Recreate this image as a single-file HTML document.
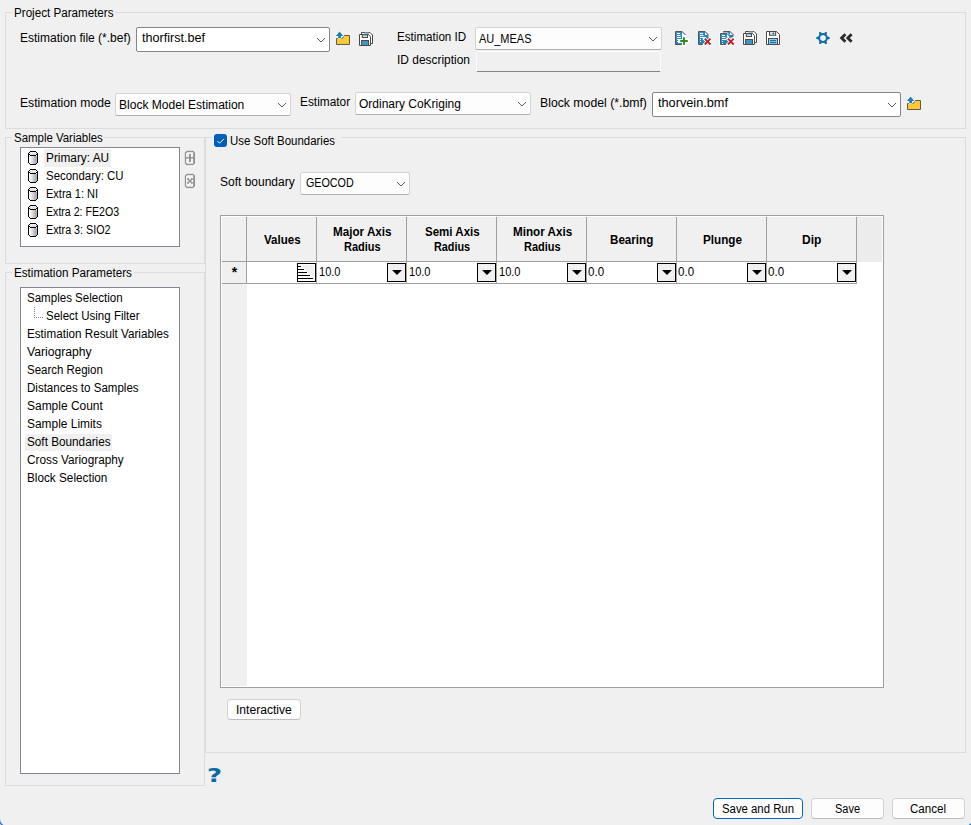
<!DOCTYPE html><html><head><meta charset="utf-8"><title>Estimation Editor</title><style>
*{box-sizing:border-box;margin:0;padding:0}
html,body{width:971px;height:825px;overflow:hidden;background:#f0f0f0}
body{position:relative;font:12px "Liberation Sans",sans-serif;color:#000}
.a{position:absolute}
.t{position:absolute;white-space:pre;line-height:14px;height:14px}
.grp{position:absolute;border:1px solid #dcdcdc}
.cb{position:absolute;background:#fff;border:1px solid #868686;border-radius:2px}
.cb2{position:absolute;background:#fdfdfd;border:1px solid #d4d4d4;border-bottom-color:#b0b0b0;border-radius:2.5px}
.lb{position:absolute;background:#fff;border:1px solid #828790}
.hl{position:absolute;background:#f0f0f0}
.btn{position:absolute;background:#fdfdfd;border:1px solid #d2d2d2;border-bottom-color:#bcbcbc;border-radius:4px}
.hd{position:absolute;background:#f0f0f0;border-right:1px solid #a0a0a0;border-bottom:1px solid #a0a0a0;font-weight:bold;text-align:center}
.dd{position:absolute;width:19px;height:19px;background:#f0f0f0;border:1px solid #000}
  .dd:after{content:"";position:absolute;left:3.6px;top:6px;border:5px solid transparent;border-top:5px solid #000;border-bottom:0}
svg{position:absolute;overflow:visible}
</style></head><body>
<div class="grp" style="left:5px;top:12px;width:961px;height:117px"></div>
<div class="grp" style="left:5px;top:137px;width:200px;height:127px"></div>
<div class="grp" style="left:5px;top:272px;width:200px;height:514px"></div>
<div class="grp" style="left:205px;top:137px;width:761px;height:616px"></div>
<div class="a" style="left:12px;top:8px;width:103px;height:10px;background:#f0f0f0"></div>
<div class="a" style="left:12px;top:133px;width:92px;height:10px;background:#f0f0f0"></div>
<div class="a" style="left:12px;top:268px;width:122px;height:10px;background:#f0f0f0"></div>
<div class="a" style="left:212px;top:133px;width:129px;height:10px;background:#f0f0f0"></div>
<div class="cb" style="left:136px;top:27px;width:194px;height:25px"></div><svg class="a" style="left:316px;top:36.5px" width="10" height="6" viewBox="0 0 10 6"><path d="M1 1 L5 5 L9 1" fill="none" stroke="#5a5a5a" stroke-width="1"/></svg>
<div class="cb2" style="left:475px;top:27px;width:187px;height:23px"></div><svg class="a" style="left:648px;top:36px" width="10" height="6" viewBox="0 0 10 6"><path d="M1 1 L5 5 L9 1" fill="none" stroke="#5a5a5a" stroke-width="1"/></svg>
<div class="a" style="left:476px;top:51px;width:185px;height:21px;background:#f0f0f0;border:1px solid #fbfbfb;border-bottom:1px solid #868686;border-radius:2.5px 2.5px 1.5px 1.5px"></div>
<div class="cb2" style="left:115px;top:93px;width:176px;height:23px"></div><svg class="a" style="left:277px;top:102px" width="10" height="6" viewBox="0 0 10 6"><path d="M1 1 L5 5 L9 1" fill="none" stroke="#5a5a5a" stroke-width="1"/></svg>
<div class="cb2" style="left:355px;top:92px;width:176px;height:23px"></div><svg class="a" style="left:517px;top:100.9px" width="10" height="6" viewBox="0 0 10 6"><path d="M1 1 L5 5 L9 1" fill="none" stroke="#5a5a5a" stroke-width="1"/></svg>
<div class="cb" style="left:652px;top:92px;width:249px;height:25px"></div><svg class="a" style="left:887px;top:101.5px" width="10" height="6" viewBox="0 0 10 6"><path d="M1 1 L5 5 L9 1" fill="none" stroke="#5a5a5a" stroke-width="1"/></svg>
<div class="lb" style="left:20px;top:147px;width:160px;height:100px"></div>
<div class="hl" style="left:44px;top:149px;width:67px;height:18px"></div>
<div class="lb" style="left:20px;top:287px;width:160px;height:487px"></div>
<div class="hl" style="left:25px;top:434px;width:87px;height:17px"></div>
<svg style="left:34px;top:307px" width="10" height="12" viewBox="0 0 10 12" shape-rendering="crispEdges"><path d="M0 0h1v1h-1zM0 2h1v1h-1zM0 4h1v1h-1zM0 6h1v1h-1zM0 8h1v1h-1zM0 10h1v1h-1zM2 10h1v1h-1zM4 10h1v1h-1zM6 10h1v1h-1zM8 10h1v1h-1z" fill="#808080"/></svg>
<div class="a" style="left:214px;top:134px;width:13px;height:13px;background:#005fb8;border-radius:3px"></div>
<svg style="left:214px;top:134px" width="13" height="13" viewBox="0 0 13 13"><path d="M3.5 7.1 L5.6 9.2 L9.9 4.9" fill="none" stroke="#fff" stroke-width="1"/></svg>
<div class="cb2" style="left:300px;top:172px;width:110px;height:23px"></div><svg class="a" style="left:396px;top:180.5px" width="10" height="6" viewBox="0 0 10 6"><path d="M1 1 L5 5 L9 1" fill="none" stroke="#5a5a5a" stroke-width="1"/></svg>
<div class="a" style="left:220px;top:215px;width:664px;height:473px;background:#fff;border:1px solid #a0a0a0"></div>
<div class="a" style="left:222px;top:217px;width:660px;height:45px;background:#ececec"></div>
<div class="a" style="left:222px;top:262px;width:25px;height:424px;background:#f0f0f0"></div>
<div class="hd" style="left:222px;top:217px;width:25px;height:45px"></div>
<div class="hd" style="left:247px;top:217px;width:70px;height:45px"></div>
<div class="hd" style="left:317px;top:217px;width:90px;height:45px"></div>
<div class="hd" style="left:407px;top:217px;width:90px;height:45px"></div>
<div class="hd" style="left:497px;top:217px;width:90px;height:45px"></div>
<div class="hd" style="left:587px;top:217px;width:90px;height:45px"></div>
<div class="hd" style="left:677px;top:217px;width:90px;height:45px"></div>
<div class="hd" style="left:767px;top:217px;width:90px;height:45px"></div>
<div class="a" style="left:222px;top:262px;width:25px;height:22px;border-right:1px solid #a0a0a0;border-bottom:1px solid #a0a0a0;background:#f0f0f0"></div>
<div class="t" style="left:231.7px;top:265.4px;font-weight:bold;font-size:14px">*</div>
<div class="a" style="left:247px;top:262px;width:610px;height:22px;border-bottom:1px solid #a0a0a0;border-right:1px solid #a0a0a0"></div>
<div class="a" style="left:316px;top:262px;width:1px;height:21px;background:#a0a0a0"></div>
<div class="a" style="left:406px;top:262px;width:1px;height:21px;background:#a0a0a0"></div>
<div class="a" style="left:496px;top:262px;width:1px;height:21px;background:#a0a0a0"></div>
<div class="a" style="left:586px;top:262px;width:1px;height:21px;background:#a0a0a0"></div>
<div class="a" style="left:676px;top:262px;width:1px;height:21px;background:#a0a0a0"></div>
<div class="a" style="left:766px;top:262px;width:1px;height:21px;background:#a0a0a0"></div>
<div class="a" style="left:297px;top:263px;width:19px;height:19px;background:#fff;border:1px solid #000"></div>
<svg style="left:297px;top:263px" width="19" height="19" viewBox="0 0 19 19"><path d="M5 2 H17 V16 L14 13 L11 10 L8 7 Z" fill="#f0f0f0"/><path d="M1 3.5H4 M1 6.5H7 M1 9.5H10 M1 12.5H13 M1 15.5H16" stroke="#000" stroke-width="1" fill="none"/></svg>
<div class="dd" style="left:387px;top:263px"></div>
<div class="dd" style="left:477px;top:263px"></div>
<div class="dd" style="left:567px;top:263px"></div>
<div class="dd" style="left:657px;top:263px"></div>
<div class="dd" style="left:747px;top:263px"></div>
<div class="dd" style="left:837px;top:263px"></div>
<div class="btn" style="left:227px;top:699px;width:74px;height:21px"></div>
<div class="btn" style="left:713px;top:798px;width:90px;height:21px;border-color:#0067c0"></div>
<div class="btn" style="left:811px;top:798px;width:73px;height:21px"></div>
<div class="btn" style="left:892px;top:798px;width:73px;height:21px"></div>
<div class="a" style="left:206.9px;top:762.6px;font:bold 20px 'DejaVu Sans','Liberation Sans',sans-serif;color:#0a6aa6;line-height:24px;transform-origin:0 0;transform:scaleX(1.3)">?</div>
<svg style="left:-1.5px;top:816.5px" width="10" height="10" viewBox="0 0 10 10"><path d="M0.4 2 A7.6 7.6 0 0 0 8 9.6 V10 H0 Z" fill="#cfcfcf"/><path d="M0.4 2 A7.6 7.6 0 0 0 8 9.6" fill="none" stroke="#1a70d0" stroke-width="1.2"/></svg>
<svg style="left:962.5px;top:816.5px" width="10" height="10" viewBox="0 0 10 10"><path d="M9.6 2 A7.6 7.6 0 0 1 2 9.6 V10 H10 Z" fill="#cfcfcf"/><path d="M9.6 2 A7.6 7.6 0 0 1 2 9.6" fill="none" stroke="#1a70d0" stroke-width="1.2"/></svg>
<svg style="left:332px;top:28px" width="24" height="20" viewBox="0 0 24 20" ><path d="M4.5 10.5 H10.2 L12.2 7.5 H17.5 V16.5 H4.5 Z" fill="#fcc934" stroke="#5f5a50" stroke-width="1" stroke-linejoin="round"/><path d="M7.6 3.6 L11.3 8 H9.1 V10.1 H6.2 V8 H3.9 Z" fill="#1b7fb6" stroke="#fff" stroke-width="1.2" paint-order="stroke" stroke-linejoin="round"/></svg>
<svg style="left:354px;top:28px" width="24" height="20" viewBox="0 0 24 20" ><path d="M7.5 6.5 V4.5 H16 L18.5 7 V15.5 H16.5" fill="#fff" stroke="#4a4a4a" stroke-width="1" stroke-linejoin="round"/><rect x="10.5" y="4.5" width="4.5" height="2" fill="#8cc3e0" stroke="none"/><path d="M5.5 6.5 H14.5 L16.5 8.8 V17.5 H5.5 Z" fill="#fff" stroke="#4a4a4a" stroke-width="1" stroke-linejoin="round"/><rect x="8.3" y="6.8" width="5.2" height="2.7" fill="#cfe3ee" stroke="#4a4a4a" stroke-width="1"/><rect x="7.6" y="12.5" width="6.9" height="5" fill="#3c96c8" stroke="#4a4a4a" stroke-width="1"/></svg>
<svg style="left:670px;top:26px" width="24" height="24" viewBox="0 0 24 24" ><defs><linearGradient id="dg" x1="0" y1="0" x2="1" y2="1"><stop offset="0" stop-color="#3a9bd0"/><stop offset="1" stop-color="#1673ac"/></linearGradient></defs><path d="M5.5 5.5 H12 L15.5 9 V18.5 H5.5 Z" fill="url(#dg)" stroke="none"/><path d="M12 5.8 L15.2 9 H12 Z" fill="#fff"/><path d="M15.5 9 L12 5.5 H5.5 V18.5 H11.5" fill="none" stroke="#555" stroke-width="1"/><path d="M7 7.5 h3 M7 9.5 h3.5 M7 11.5 h4 M7 13.5 h1 M7 15.5 h1" stroke="#fff" stroke-width="1"/><path d="M14 11 V19 M10 15 H18" stroke="#fff" stroke-width="4" stroke-linecap="square"/><path d="M14 11.2 V18.8 M10.2 15 H17.8" stroke="#2a8c1a" stroke-width="1.9"/></svg>
<svg style="left:692px;top:26px" width="24" height="24" viewBox="0 0 24 24" ><defs><linearGradient id="dg" x1="0" y1="0" x2="1" y2="1"><stop offset="0" stop-color="#3a9bd0"/><stop offset="1" stop-color="#1673ac"/></linearGradient></defs><path d="M6.5 5.5 H13 L16.5 9 V18.5 H6.5 Z" fill="url(#dg)" stroke="none"/><path d="M13 5.8 L16.2 9 H13 Z" fill="#fff"/><path d="M16.5 9 L13 5.5 H6.5 V18.5 H12.5" fill="none" stroke="#555" stroke-width="1"/><path d="M8 7.5 h3 M8 9.5 h3.5 M8 11.5 h4 M8 13.5 h1 M8 15.5 h1" stroke="#fff" stroke-width="1"/><path d="M13.0 13.0 L18.2 18.2 M18.2 13.0 L13.0 18.2" stroke="#fff" stroke-width="3.6" stroke-linecap="square"/><path d="M12.7 12.7 L18.5 18.5 M18.5 12.7 L12.7 18.5" stroke="#b8202a" stroke-width="1.9"/></svg>
<svg style="left:692px;top:26px" width="48" height="24" viewBox="0 0 48 24" ><defs><linearGradient id="dg" x1="0" y1="0" x2="1" y2="1"><stop offset="0" stop-color="#3a9bd0"/><stop offset="1" stop-color="#1673ac"/></linearGradient></defs><g><path d="M31.5 5.5 H38 L41.5 9 V11.5 H31.5 Z" fill="url(#dg)" stroke="none"/><path d="M38 5.8 L41.2 9 H38 Z" fill="#fff"/><path d="M41.5 9 L38 5.5 H31.5 V11.5 H37.5" fill="none" stroke="#555" stroke-width="1"/></g><path d="M27.5 6.5 H35.5 L37.5 9 V19.5 H27.5 Z" fill="#fff"/><path d="M28.5 7.5 H35 L38.5 11 V18.5 H28.5 Z" fill="url(#dg)" stroke="none"/><path d="M35 7.8 L38.2 11 H35 Z" fill="#fff"/><path d="M38.5 11 L35 7.5 H28.5 V18.5 H34.5" fill="none" stroke="#555" stroke-width="1"/><path d="M30 9.5 h3 M30 11.5 h3.5 M30 13.5 h4 M30 15.5 h1 M30 17.5 h1" stroke="#fff" stroke-width="1"/><path d="M36.199999999999996 13.0 L41.4 18.2 M41.4 13.0 L36.199999999999996 18.2" stroke="#fff" stroke-width="3.6" stroke-linecap="square"/><path d="M35.9 12.7 L41.699999999999996 18.5 M41.699999999999996 12.7 L35.9 18.5" stroke="#b8202a" stroke-width="1.9"/></svg>
<svg style="left:738px;top:27px" width="24" height="20" viewBox="0 0 24 20" ><path d="M7.5 6.5 V4.5 H16 L18.5 7 V15.5 H16.5" fill="#fff" stroke="#4a4a4a" stroke-width="1" stroke-linejoin="round"/><rect x="10.5" y="4.5" width="4.5" height="2" fill="#8cc3e0" stroke="none"/><path d="M5.5 6.5 H14.5 L16.5 8.8 V17.5 H5.5 Z" fill="#fff" stroke="#4a4a4a" stroke-width="1" stroke-linejoin="round"/><rect x="8.3" y="6.8" width="5.2" height="2.7" fill="#cfe3ee" stroke="#4a4a4a" stroke-width="1"/><rect x="7.6" y="12.5" width="6.9" height="5" fill="#3c96c8" stroke="#4a4a4a" stroke-width="1"/></svg>
<svg style="left:766px;top:31px" width="14" height="14" viewBox="0 0 14 14" ><path d="M0.5 0.5 H10.5 L13.5 3.5 V13.5 H0.5 Z" fill="#fff" stroke="#4a4a4a" stroke-width="1" stroke-linejoin="round"/><rect x="3.5" y="0.5" width="6.2" height="3.8" fill="#dcdcdc" stroke="#4a4a4a" stroke-width="1"/><circle cx="7.4" cy="2.4" r="0.9" fill="#0d6ca9"/><rect x="2.5" y="7.5" width="9" height="6" fill="#8fcbeb" stroke="#4a4a4a" stroke-width="1"/><path d="M4 9.6 H10 M4 11.6 H10" stroke="#0067a5" stroke-width="1"/></svg>
<svg style="left:815px;top:30px" width="16" height="16" viewBox="0 0 16 16" ><g transform="translate(8 8)"><circle r="3.9" fill="none" stroke="#0d6ca9" stroke-width="2"/><path d="M4.20 0.00 L5.60 0.00" stroke="#0d6ca9" stroke-width="2.4" stroke-linecap="round"/><path d="M2.10 3.64 L2.80 4.85" stroke="#0d6ca9" stroke-width="2.4" stroke-linecap="round"/><path d="M-2.10 3.64 L-2.80 4.85" stroke="#0d6ca9" stroke-width="2.4" stroke-linecap="round"/><path d="M-4.20 0.00 L-5.60 0.00" stroke="#0d6ca9" stroke-width="2.4" stroke-linecap="round"/><path d="M-2.10 -3.64 L-2.80 -4.85" stroke="#0d6ca9" stroke-width="2.4" stroke-linecap="round"/><path d="M2.10 -3.64 L2.80 -4.85" stroke="#0d6ca9" stroke-width="2.4" stroke-linecap="round"/></g></svg>
<svg style="left:838.5px;top:32px" width="16" height="12" viewBox="0 0 16 12" ><path d="M6.4 2.2 L2.6 6 L6.4 9.8 M12.6 2.2 L8.8 6 L12.6 9.8" fill="none" stroke="#2b2b2b" stroke-width="2.8" stroke-linejoin="miter"/></svg>
<svg style="left:903px;top:93px" width="24" height="20" viewBox="0 0 24 20" ><path d="M4.5 10.5 H10.2 L12.2 7.5 H17.5 V16.5 H4.5 Z" fill="#fcc934" stroke="#5f5a50" stroke-width="1" stroke-linejoin="round"/><path d="M7.6 3.6 L11.3 8 H9.1 V10.1 H6.2 V8 H3.9 Z" fill="#1b7fb6" stroke="#fff" stroke-width="1.2" paint-order="stroke" stroke-linejoin="round"/></svg>
<svg style="left:28px;top:151px" width="10" height="14" viewBox="0 0 10 14" ><defs><linearGradient id="cg" x1="0" x2="1"><stop offset="0" stop-color="#fff"/><stop offset="0.3" stop-color="#e4e4e4"/><stop offset="1" stop-color="#9c9c9c"/></linearGradient></defs><path d="M2 0.5 H8 L9.5 2.5 V11.5 L8 13.5 H2 L0.5 11.5 V2.5 Z" fill="#fff"/><rect x="1.8" y="5" width="7" height="8" fill="url(#cg)"/><rect x="1.5" y="1.5" width="7" height="2.5" fill="#e2e2e2"/><path d="M2 0.5 H8 M2 13.5 H8 M2 4.5 H8" stroke="#000" stroke-width="1" shape-rendering="crispEdges"/><path d="M0.5 2 V12 M9.5 2 V12" stroke="#000" stroke-width="1" shape-rendering="crispEdges"/><path d="M1 1 h1 v1 h-1z M8 1 h1 v1 h-1z M1 3 h1 v1 h-1z M8 3 h1 v1 h-1z M1 12 h1 v1 h-1z M8 12 h1 v1 h-1z" fill="#000" shape-rendering="crispEdges"/></svg>
<svg style="left:28px;top:169px" width="10" height="14" viewBox="0 0 10 14" ><defs><linearGradient id="cg" x1="0" x2="1"><stop offset="0" stop-color="#fff"/><stop offset="0.3" stop-color="#e4e4e4"/><stop offset="1" stop-color="#9c9c9c"/></linearGradient></defs><path d="M2 0.5 H8 L9.5 2.5 V11.5 L8 13.5 H2 L0.5 11.5 V2.5 Z" fill="#fff"/><rect x="1.8" y="5" width="7" height="8" fill="url(#cg)"/><rect x="1.5" y="1.5" width="7" height="2.5" fill="#e2e2e2"/><path d="M2 0.5 H8 M2 13.5 H8 M2 4.5 H8" stroke="#000" stroke-width="1" shape-rendering="crispEdges"/><path d="M0.5 2 V12 M9.5 2 V12" stroke="#000" stroke-width="1" shape-rendering="crispEdges"/><path d="M1 1 h1 v1 h-1z M8 1 h1 v1 h-1z M1 3 h1 v1 h-1z M8 3 h1 v1 h-1z M1 12 h1 v1 h-1z M8 12 h1 v1 h-1z" fill="#000" shape-rendering="crispEdges"/></svg>
<svg style="left:28px;top:187px" width="10" height="14" viewBox="0 0 10 14" ><defs><linearGradient id="cg" x1="0" x2="1"><stop offset="0" stop-color="#fff"/><stop offset="0.3" stop-color="#e4e4e4"/><stop offset="1" stop-color="#9c9c9c"/></linearGradient></defs><path d="M2 0.5 H8 L9.5 2.5 V11.5 L8 13.5 H2 L0.5 11.5 V2.5 Z" fill="#fff"/><rect x="1.8" y="5" width="7" height="8" fill="url(#cg)"/><rect x="1.5" y="1.5" width="7" height="2.5" fill="#e2e2e2"/><path d="M2 0.5 H8 M2 13.5 H8 M2 4.5 H8" stroke="#000" stroke-width="1" shape-rendering="crispEdges"/><path d="M0.5 2 V12 M9.5 2 V12" stroke="#000" stroke-width="1" shape-rendering="crispEdges"/><path d="M1 1 h1 v1 h-1z M8 1 h1 v1 h-1z M1 3 h1 v1 h-1z M8 3 h1 v1 h-1z M1 12 h1 v1 h-1z M8 12 h1 v1 h-1z" fill="#000" shape-rendering="crispEdges"/></svg>
<svg style="left:28px;top:205px" width="10" height="14" viewBox="0 0 10 14" ><defs><linearGradient id="cg" x1="0" x2="1"><stop offset="0" stop-color="#fff"/><stop offset="0.3" stop-color="#e4e4e4"/><stop offset="1" stop-color="#9c9c9c"/></linearGradient></defs><path d="M2 0.5 H8 L9.5 2.5 V11.5 L8 13.5 H2 L0.5 11.5 V2.5 Z" fill="#fff"/><rect x="1.8" y="5" width="7" height="8" fill="url(#cg)"/><rect x="1.5" y="1.5" width="7" height="2.5" fill="#e2e2e2"/><path d="M2 0.5 H8 M2 13.5 H8 M2 4.5 H8" stroke="#000" stroke-width="1" shape-rendering="crispEdges"/><path d="M0.5 2 V12 M9.5 2 V12" stroke="#000" stroke-width="1" shape-rendering="crispEdges"/><path d="M1 1 h1 v1 h-1z M8 1 h1 v1 h-1z M1 3 h1 v1 h-1z M8 3 h1 v1 h-1z M1 12 h1 v1 h-1z M8 12 h1 v1 h-1z" fill="#000" shape-rendering="crispEdges"/></svg>
<svg style="left:28px;top:223px" width="10" height="14" viewBox="0 0 10 14" ><defs><linearGradient id="cg" x1="0" x2="1"><stop offset="0" stop-color="#fff"/><stop offset="0.3" stop-color="#e4e4e4"/><stop offset="1" stop-color="#9c9c9c"/></linearGradient></defs><path d="M2 0.5 H8 L9.5 2.5 V11.5 L8 13.5 H2 L0.5 11.5 V2.5 Z" fill="#fff"/><rect x="1.8" y="5" width="7" height="8" fill="url(#cg)"/><rect x="1.5" y="1.5" width="7" height="2.5" fill="#e2e2e2"/><path d="M2 0.5 H8 M2 13.5 H8 M2 4.5 H8" stroke="#000" stroke-width="1" shape-rendering="crispEdges"/><path d="M0.5 2 V12 M9.5 2 V12" stroke="#000" stroke-width="1" shape-rendering="crispEdges"/><path d="M1 1 h1 v1 h-1z M8 1 h1 v1 h-1z M1 3 h1 v1 h-1z M8 3 h1 v1 h-1z M1 12 h1 v1 h-1z M8 12 h1 v1 h-1z" fill="#000" shape-rendering="crispEdges"/></svg>
<svg style="left:185px;top:151px" width="11" height="15" viewBox="0 0 11 15" ><g transform="translate(1 1)" stroke="#fff" fill="#fff"><path d="M2 0.5 H8 L9.5 2 V12 L8 13.5 H2 L0.5 12 V2 Z" fill="none" stroke-width="1.35"/><path d="M8.6 2 V12" fill="none" stroke-width="0.9"/><rect x="4" y="3" width="2" height="8" stroke="none"/><rect x="0.5" y="6.1" width="9" height="1.5" stroke="none"/></g><g stroke="#939393" fill="#939393"><path d="M2 0.5 H8 L9.5 2 V12 L8 13.5 H2 L0.5 12 V2 Z" fill="none" stroke-width="1.35"/><path d="M8.6 2 V12" fill="none" stroke-width="0.9"/><rect x="4" y="3" width="2" height="8" stroke="none"/><rect x="0.5" y="6.1" width="9" height="1.5" stroke="none"/></g></svg>
<svg style="left:185px;top:174px" width="11" height="15" viewBox="0 0 11 15" ><g transform="translate(1 1)" stroke="#fff" fill="#fff"><path d="M2 0.5 H8 L9.5 2 V12 L8 13.5 H2 L0.5 12 V2 Z" fill="none" stroke-width="1.35"/><path d="M8.6 2 V12" fill="none" stroke-width="0.9"/><rect x="3.5" y="5.5" width="3" height="3" stroke="none"/><rect x="2.2" y="4.2" width="1.8" height="1.8" stroke="none"/><rect x="6" y="4.2" width="1.8" height="1.8" stroke="none"/><rect x="2.2" y="8" width="1.8" height="1.8" stroke="none"/><rect x="6" y="8" width="1.8" height="1.8" stroke="none"/></g><g stroke="#939393" fill="#939393"><path d="M2 0.5 H8 L9.5 2 V12 L8 13.5 H2 L0.5 12 V2 Z" fill="none" stroke-width="1.35"/><path d="M8.6 2 V12" fill="none" stroke-width="0.9"/><rect x="3.5" y="5.5" width="3" height="3" stroke="none"/><rect x="2.2" y="4.2" width="1.8" height="1.8" stroke="none"/><rect x="6" y="4.2" width="1.8" height="1.8" stroke="none"/><rect x="2.2" y="8" width="1.8" height="1.8" stroke="none"/><rect x="6" y="8" width="1.8" height="1.8" stroke="none"/></g></svg>
<span class="t" style="left:14.0px;top:6.0px;transform-origin:0 0;transform:scaleX(0.9688)">Project Parameters</span>
<span class="t" style="left:20.2px;top:31.0px;transform-origin:0 0;transform:scaleX(1.0007)">Estimation file (*.bef)</span>
<span class="t" style="left:141.5px;top:31.0px;transform-origin:0 0;transform:scaleX(1.0495)">thorfirst.bef</span>
<span class="t" style="left:397.3px;top:30.0px;transform-origin:0 0;transform:scaleX(0.9697)">Estimation ID</span>
<span class="t" style="left:479.0px;top:32.0px;transform-origin:0 0;transform:scaleX(0.9153)">AU_MEAS</span>
<span class="t" style="left:397.3px;top:53.0px;transform-origin:0 0;transform:scaleX(0.9949)">ID description</span>
<span class="t" style="left:20.0px;top:96.0px;transform-origin:0 0;transform:scaleX(1.0148)">Estimation mode</span>
<span class="t" style="left:118.8px;top:98.0px;transform-origin:0 0;transform:scaleX(1.0047)">Block Model Estimation</span>
<span class="t" style="left:300.2px;top:95.0px;transform-origin:0 0;transform:scaleX(0.9884)">Estimator</span>
<span class="t" style="left:358.9px;top:97.0px;transform-origin:0 0;transform:scaleX(0.9986)">Ordinary CoKriging</span>
<span class="t" style="left:539.9px;top:96.0px;transform-origin:0 0;transform:scaleX(1.0210)">Block model (*.bmf)</span>
<span class="t" style="left:657.5px;top:96.0px;transform-origin:0 0;transform:scaleX(1.0601)">thorvein.bmf</span>
<span class="t" style="left:13.7px;top:130.5px;transform-origin:0 0;transform:scaleX(0.9531)">Sample Variables</span>
<span class="t" style="left:45.9px;top:151.0px;transform-origin:0 0;transform:scaleX(0.9857)">Primary: AU</span>
<span class="t" style="left:45.9px;top:169.0px;transform-origin:0 0;transform:scaleX(0.9536)">Secondary: CU</span>
<span class="t" style="left:45.9px;top:187.0px;transform-origin:0 0;transform:scaleX(0.9191)">Extra 1: NI</span>
<span class="t" style="left:45.9px;top:205.0px;transform-origin:0 0;transform:scaleX(0.8839)">Extra 2: FE2O3</span>
<span class="t" style="left:45.9px;top:223.0px;transform-origin:0 0;transform:scaleX(0.8968)">Extra 3: SIO2</span>
<span class="t" style="left:14.1px;top:266.0px;transform-origin:0 0;transform:scaleX(0.9712)">Estimation Parameters</span>
<span class="t" style="left:26.6px;top:291.0px;transform-origin:0 0;transform:scaleX(0.9619)">Samples Selection</span>
<span class="t" style="left:46.1px;top:309.0px;transform-origin:0 0;transform:scaleX(0.9602)">Select Using Filter</span>
<span class="t" style="left:26.6px;top:327.0px;transform-origin:0 0;transform:scaleX(0.9723)">Estimation Result Variables</span>
<span class="t" style="left:26.6px;top:345.0px;transform-origin:0 0;transform:scaleX(1.0137)">Variography</span>
<span class="t" style="left:26.6px;top:363.0px;transform-origin:0 0;transform:scaleX(0.9548)">Search Region</span>
<span class="t" style="left:26.6px;top:381.0px;transform-origin:0 0;transform:scaleX(0.9616)">Distances to Samples</span>
<span class="t" style="left:26.6px;top:399.0px;transform-origin:0 0;transform:scaleX(0.9968)">Sample Count</span>
<span class="t" style="left:26.6px;top:417.0px;transform-origin:0 0;transform:scaleX(0.9939)">Sample Limits</span>
<span class="t" style="left:26.6px;top:435.0px;transform-origin:0 0;transform:scaleX(0.9790)">Soft Boundaries</span>
<span class="t" style="left:26.6px;top:453.0px;transform-origin:0 0;transform:scaleX(0.9819)">Cross Variography</span>
<span class="t" style="left:26.6px;top:471.0px;transform-origin:0 0;transform:scaleX(0.9799)">Block Selection</span>
<span class="t" style="left:230.1px;top:134.0px;transform-origin:0 0;transform:scaleX(0.9540)">Use Soft Boundaries</span>
<span class="t" style="left:220.1px;top:175.0px;transform-origin:0 0;transform:scaleX(0.9997)">Soft boundary</span>
<span class="t" style="left:306.2px;top:176.0px;transform-origin:0 0;transform:scaleX(0.8942)">GEOCOD</span>
<span class="t" style="left:235.8px;top:703.0px;transform-origin:0 0;transform:scaleX(1.0080)">Interactive</span>
<span class="t" style="left:721.5px;top:802.0px;transform-origin:0 0;transform:scaleX(0.9466)">Save and Run</span>
<span class="t" style="left:834.7px;top:802.0px;transform-origin:0 0;transform:scaleX(0.9138)">Save</span>
<span class="t" style="left:910.2px;top:802.0px;transform-origin:0 0;transform:scaleX(0.9663)">Cancel</span>
<span class="t" style="left:263.9px;top:233.0px;transform-origin:0 0;transform:scaleX(0.9624);font-weight:bold">Values</span>
<span class="t" style="left:333.1px;top:225.0px;transform-origin:0 0;transform:scaleX(0.9726);font-weight:bold">Major Axis</span>
<span class="t" style="left:343.9px;top:240.0px;transform-origin:0 0;transform:scaleX(0.9171);font-weight:bold">Radius</span>
<span class="t" style="left:424.8px;top:225.0px;transform-origin:0 0;transform:scaleX(0.9610);font-weight:bold">Semi Axis</span>
<span class="t" style="left:434.3px;top:240.0px;transform-origin:0 0;transform:scaleX(0.9021);font-weight:bold">Radius</span>
<span class="t" style="left:512.5px;top:225.0px;transform-origin:0 0;transform:scaleX(0.9720);font-weight:bold">Minor Axis</span>
<span class="t" style="left:523.9px;top:240.0px;transform-origin:0 0;transform:scaleX(0.9171);font-weight:bold">Radius</span>
<span class="t" style="left:610.1px;top:233.0px;transform-origin:0 0;transform:scaleX(0.9690);font-weight:bold">Bearing</span>
<span class="t" style="left:703.0px;top:233.0px;transform-origin:0 0;transform:scaleX(0.9721);font-weight:bold">Plunge</span>
<span class="t" style="left:802.1px;top:233.0px;transform-origin:0 0;transform:scaleX(1.0029);font-weight:bold">Dip</span>
<span class="t" style="left:319.3px;top:265.0px;transform-origin:0 0;transform:scaleX(0.9204)">10.0</span>
<span class="t" style="left:409.3px;top:265.0px;transform-origin:0 0;transform:scaleX(0.9204)">10.0</span>
<span class="t" style="left:499.3px;top:265.0px;transform-origin:0 0;transform:scaleX(0.9204)">10.0</span>
<span class="t" style="left:588.4px;top:265.0px;transform-origin:0 0;transform:scaleX(0.9648)">0.0</span>
<span class="t" style="left:678.4px;top:265.0px;transform-origin:0 0;transform:scaleX(0.9648)">0.0</span>
<span class="t" style="left:768.4px;top:265.0px;transform-origin:0 0;transform:scaleX(0.9648)">0.0</span>
</body></html>
